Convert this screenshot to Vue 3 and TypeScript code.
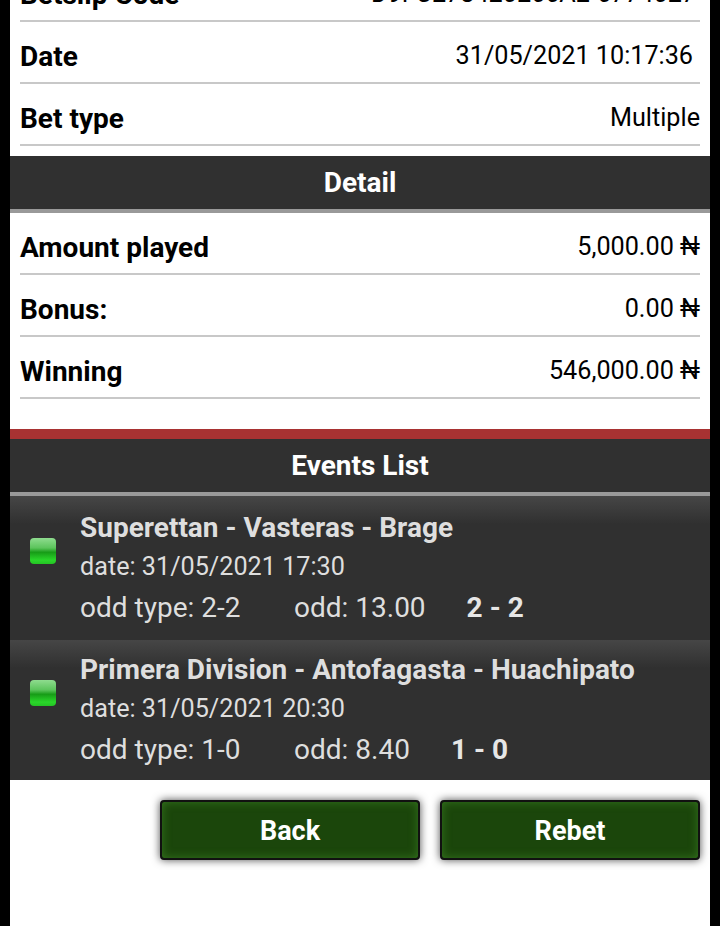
<script setup lang="ts">
interface Row {
  label: string
  value: string
  cls?: string
}

interface BetEvent {
  title: string
  date: string
  oddType: string
  odd: string
  score: string
}

const topRows: Row[] = [
  { label: 'Betslip Code', value: 'D9FC278420266A2-6774027', cls: 'code' },
  { label: 'Date', value: '31/05/2021 10:17:36', cls: 'stamp' },
  { label: 'Bet type', value: 'Multiple' }
]

const detailRows: Row[] = [
  { label: 'Amount played', value: '5,000.00 ₦' },
  { label: 'Bonus:', value: '0.00 ₦' },
  { label: 'Winning', value: '546,000.00 ₦' }
]

const events: BetEvent[] = [
  { title: 'Superettan - Vasteras - Brage', date: '31/05/2021 17:30', oddType: '2-2', odd: '13.00', score: '2 - 2' },
  { title: 'Primera Division - Antofagasta - Huachipato', date: '31/05/2021 20:30', oddType: '1-0', odd: '8.40', score: '1 - 0' }
]
</script>

<template>
  <div class="page">
    <div class="sheet">
      <div class="rows top">
        <div v-for="row in topRows" :key="row.label" class="row">
          <span class="label">{{ row.label }}</span>
          <span class="value" :class="row.cls">{{ row.value }}</span>
        </div>
      </div>

      <div class="bar">Detail</div>
      <div class="rows">
        <div v-for="row in detailRows" :key="row.label" class="row">
          <span class="label">{{ row.label }}</span>
          <span class="value">{{ row.value }}</span>
        </div>
      </div>

      <div class="events">
        <div class="bar">Events List</div>
        <div v-for="ev in events" :key="ev.title" class="event">
          <span class="led"></span>
          <div class="info">
            <div class="title">{{ ev.title }}</div>
            <div class="date">date: {{ ev.date }}</div>
            <div class="odds">
              <span class="odd-type">odd type: {{ ev.oddType }}</span>
              <span class="odd">odd: {{ ev.odd }}</span>
              <b class="score">{{ ev.score }}</b>
            </div>
          </div>
        </div>
      </div>

      <div class="actions">
        <button class="btn">Back</button>
        <button class="btn">Rebet</button>
      </div>
    </div>
  </div>
</template>

<style>
html, body {
  background: #000;
}
</style>

<style scoped>
.page {
  height: 926px;
  overflow: hidden;
  background: #000;
  font-family: Roboto, "Liberation Sans", sans-serif;
}

.sheet {
  height: 926px;
  margin: 0 10px;
  background: #fff;
  color: #000;
  overflow: hidden;
}

.rows {
  padding: 0 10px;
}

.top {
  margin-top: -40px;
  margin-bottom: 10px;
}

.row {
  height: 62px;
  padding-top: 8px;
  display: flex;
  align-items: center;
  justify-content: space-between;
  border-bottom: 2px solid #c8c8c8;
  box-sizing: border-box;
}

.label {
  font-size: 28px;
  font-weight: 700;
}

.value {
  font-size: 25.2px;
  padding-bottom: 1px;
}

.value.stamp {
  padding-right: 7px;
}

.value.code {
  padding-right: 4px;
}

.bar {
  height: 53px;
  line-height: 54px;
  background: #303030;
  border-bottom: 4px solid #999;
  color: #fff;
  text-align: center;
  font-size: 28px;
  font-weight: 700;
}

.events {
  margin-top: 30px;
  border-top: 10px solid #a83232;
  background: #303030;
}

.event {
  height: 140px;
  box-sizing: border-box;
  display: flex;
  align-items: flex-start;
  background: linear-gradient(#464646, #303030 28px);
}

.event:nth-child(2) {
  height: 144px;
  padding-top: 2px;
}

.led {
  width: 26px;
  height: 26px;
  margin: 40px 24px 0 20px;
  border-radius: 4px;
  background: linear-gradient(#8fdc8f, #5cc45c 38%, #179c17 55%, #2ad62a 85%, #24c424);
  flex: none;
}

.info {
  padding-top: 10px;
  color: #dedede;
}

.title {
  font-size: 28px;
  font-weight: 700;
  line-height: 40px;
}

.date {
  font-size: 25.2px;
  line-height: 38px;
}

.odds {
  display: flex;
  margin-top: 1px;
  font-size: 28px;
  line-height: 42px;
}

.odd-type {
  width: 214px;
}

.odd {
  margin-right: 41px;
}

.score {
  color: #e6e6e6;
}

.actions {
  display: flex;
  justify-content: flex-end;
  gap: 20px;
  padding: 20px 10px 0;
}

.btn {
  width: 260px;
  height: 60px;
  padding-top: 2px;
  border: 2px solid #111;
  border-radius: 4px;
  background: #1b460b;
  box-shadow: 0 0 9px rgba(0, 0, 0, 0.7), inset 0 0 10px #34741f;
  color: #fff;
  font-family: inherit;
  font-size: 27px;
  font-weight: 700;
}
</style>
